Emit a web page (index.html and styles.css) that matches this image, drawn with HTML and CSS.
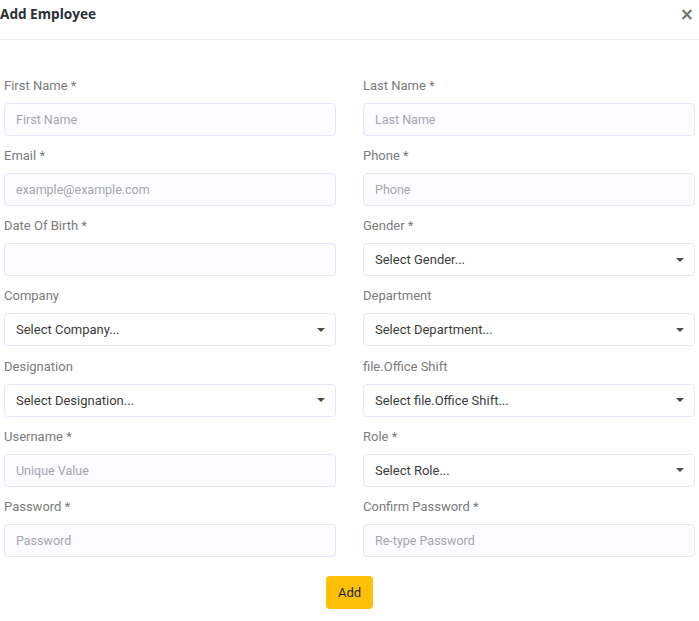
FILE: index.html
```html
<!DOCTYPE html>
<html>
<head>
<meta charset="utf-8">
<link rel="stylesheet" href="styles.css">
</head>
<body>
<div class="modal">
  <div class="modal-header">
    <h5 class="title">Add Employee</h5>
    <span class="close">&times;</span>
  </div>
  <form class="form">
    <div class="grid">
      <div class="group"><label>First Name *</label><input class="input" placeholder="First Name"></div>
      <div class="group"><label>Last Name *</label><input class="input" placeholder="Last Name"></div>
      <div class="group"><label>Email *</label><input class="input" placeholder="example@example.com"></div>
      <div class="group"><label>Phone *</label><input class="input" placeholder="Phone"></div>
      <div class="group"><label>Date Of Birth *</label><input class="input" placeholder=""></div>
      <div class="group"><label>Gender *</label><div class="select"><span>Select Gender...</span><i class="caret"></i></div></div>
      <div class="group"><label>Company</label><div class="select"><span>Select Company...</span><i class="caret"></i></div></div>
      <div class="group"><label>Department</label><div class="select"><span>Select Department...</span><i class="caret"></i></div></div>
      <div class="group"><label>Designation</label><div class="select"><span>Select Designation...</span><i class="caret"></i></div></div>
      <div class="group"><label>file.Office Shift</label><div class="select"><span>Select file.Office Shift...</span><i class="caret"></i></div></div>
      <div class="group"><label>Username *</label><input class="input" placeholder="Unique Value"></div>
      <div class="group"><label>Role *</label><div class="select"><span>Select Role...</span><i class="caret"></i></div></div>
      <div class="group"><label>Password *</label><input class="input" placeholder="Password"></div>
      <div class="group"><label>Confirm Password *</label><input class="input" placeholder="Re-type Password"></div>
    </div>
    <div class="actions"><button type="button" class="btn">Add</button></div>
  </form>
</div>
</body>
</html>
```
FILE: styles.css
```css
* { box-sizing: border-box; }
html, body { margin: 0; padding: 0; background: #fff; }
body { font-family: Roboto, "Liberation Sans", sans-serif; color: #333; }
.modal { width: 699px; }
.modal-header {
  height: 40px;
  border-bottom: 1px solid #ebebef;
  display: flex;
  align-items: flex-start;
  justify-content: space-between;
  padding: 4px 5px 0 0;
}
.title {
  margin: 0;
  font-family: "Open Sans", "Noto Sans", sans-serif;
  font-size: 13.6px;
  font-weight: 700;
  line-height: 20px;
  color: #2a2f36;
}
.close {
  font-family: "DejaVu Sans", sans-serif;
  font-size: 17px;
  font-weight: 700;
  line-height: 20px;
  color: #707070;
}
.form { padding: 36px 4px 0 4px; }
.grid {
  display: grid;
  grid-template-columns: 1fr 1fr;
  column-gap: 27px;
  row-gap: 10.17px;
}
.group { display: flex; flex-direction: column; }
label {
  font-size: 13px;
  line-height: 20px;
  color: #7b7b7b;
  margin-bottom: 7px;
}
.input {
  -webkit-appearance: none;
  appearance: none;
  height: 33px;
  border: 1px solid #e6e6f8;
  border-radius: 4px;
  background-color: #fcfcff;
  padding: 0 11px;
  font-family: Roboto, sans-serif;
  font-size: 12.5px;
  color: #333;
  outline: none;
  box-shadow: none;
}
.input::placeholder { color: #a5a5ad; }
.select {
  height: 33px;
  border: 1px solid #e6e6f8;
  border-radius: 4px;
  background: #fff;
  padding: 0 10px 0 11px;
  display: flex;
  align-items: center;
  justify-content: space-between;
  font-size: 13px;
  color: #3c3c3c;
}
.caret {
  width: 0; height: 0;
  border-left: 4px solid transparent;
  border-right: 4px solid transparent;
  border-top: 4px solid #4a4a4a;
}
.actions { display: flex; justify-content: center; padding-top: 19px; }
.btn {
  height: 33px;
  padding: 0 12px;
  border: none;
  border-radius: 4px;
  background: #ffc107;
  color: #212529;
  font-family: Roboto, sans-serif;
  font-size: 13px;
}
```
